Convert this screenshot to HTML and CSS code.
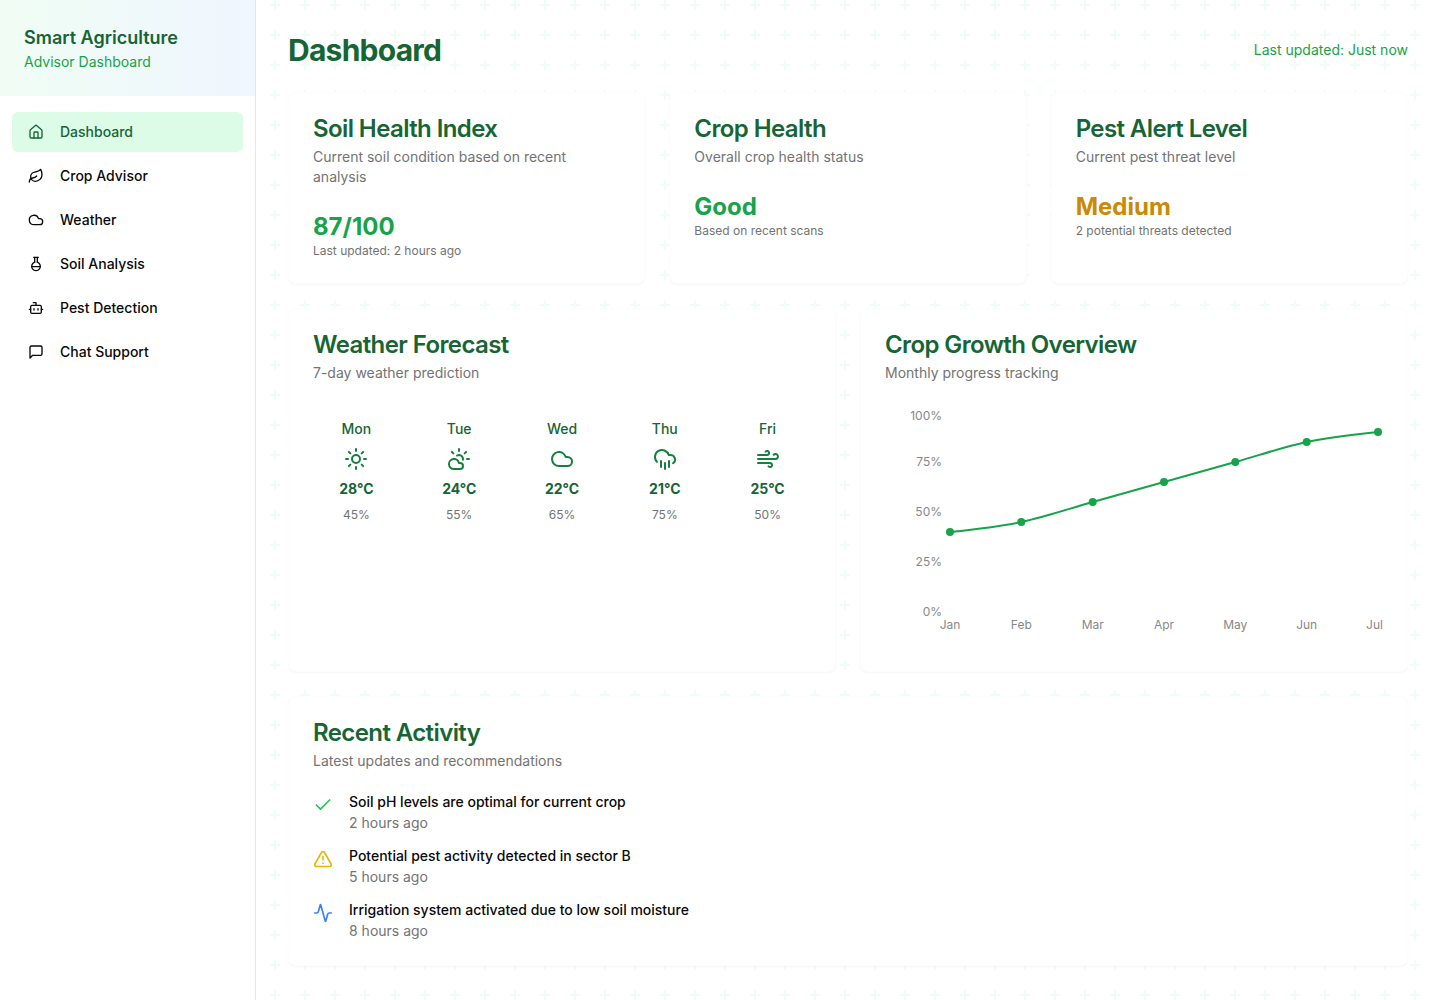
FILE: index.html
```html
<!DOCTYPE html>
<html lang="en">
<head>
    <meta charset="UTF-8">
    <meta name="viewport" content="width=device-width, initial-scale=1.0">
    <title>Smart Agriculture</title>
    <link rel="stylesheet" href="styles.css">
</head>
<body>
    <div class="layout">
        <aside class="sidebar">
            <div class="sidebar-header">
                <h2>Smart Agriculture</h2>
                <p>Advisor Dashboard</p>
            </div>
            <nav class="sidebar-nav">
                <a href="#" class="nav-link active">
                    <svg class="icon" viewBox="0 0 24 24"><path d="M15 21v-8a1 1 0 0 0-1-1h-4a1 1 0 0 0-1 1v8"/><path d="M3 10a2 2 0 0 1 .709-1.528l7-5.999a2 2 0 0 1 2.582 0l7 5.999A2 2 0 0 1 21 10v9a2 2 0 0 1-2 2H5a2 2 0 0 1-2-2z"/></svg>
                    Dashboard
                </a>
                <a href="#" class="nav-link">
                    <svg class="icon" viewBox="0 0 24 24"><path d="M11 20A7 7 0 0 1 9.8 6.1C15.5 5 17 4.48 19 2c1 2 2 4.18 2 8 0 5.5-4.78 10-10 10Z"/><path d="M2 21c0-3 1.85-5.36 5.08-6C9.5 14.52 12 13 13 12"/></svg>
                    Crop Advisor
                </a>
                <a href="#" class="nav-link">
                    <svg class="icon" viewBox="0 0 24 24"><path d="M17.5 19H9a7 7 0 1 1 6.71-9h1.79a4.5 4.5 0 1 1 0 9Z"/></svg>
                    Weather
                </a>
                <a href="#" class="nav-link">
                    <svg class="icon" viewBox="0 0 24 24"><path d="M10 2v7.31"/><path d="M14 9.3V1.99"/><path d="M8.5 2h7"/><path d="M14 9.3a6.5 6.5 0 1 1-4 0"/><path d="M5.52 16h12.96"/></svg>
                    Soil Analysis
                </a>
                <a href="#" class="nav-link">
                    <svg class="icon" viewBox="0 0 24 24"><path d="M12 8V4H8"/><rect width="16" height="12" x="4" y="8" rx="2"/><path d="M2 14h2"/><path d="M20 14h2"/><path d="M15 13v2"/><path d="M9 13v2"/></svg>
                    Pest Detection
                </a>
                <a href="#" class="nav-link">
                    <svg class="icon" viewBox="0 0 24 24"><path d="M21 15a2 2 0 0 1-2 2H7l-4 4V5a2 2 0 0 1 2-2h14a2 2 0 0 1 2 2z"/></svg>
                    Chat Support
                </a>
            </nav>
        </aside>

        <main class="content">
            <header class="page-header">
                <h1>Dashboard</h1>
                <span class="updated">Last updated: Just now</span>
            </header>

            <div class="stats">
                <section class="card">
                    <h3>Soil Health Index</h3>
                    <p class="description">Current soil condition based on recent analysis</p>
                    <div class="card-body">
                        <div class="stat-value">87/100</div>
                        <p class="stat-note">Last updated: 2 hours ago</p>
                    </div>
                </section>
                <section class="card">
                    <h3>Crop Health</h3>
                    <p class="description">Overall crop health status</p>
                    <div class="card-body">
                        <div class="stat-value">Good</div>
                        <p class="stat-note">Based on recent scans</p>
                    </div>
                </section>
                <section class="card">
                    <h3>Pest Alert Level</h3>
                    <p class="description">Current pest threat level</p>
                    <div class="card-body">
                        <div class="stat-value warning">Medium</div>
                        <p class="stat-note">2 potential threats detected</p>
                    </div>
                </section>
            </div>

            <div class="panels">
                <section class="card">
                    <h3>Weather Forecast</h3>
                    <p class="description">7-day weather prediction</p>
                    <div class="card-body forecast">
                        <div class="day">
                            <span class="day-name">Mon</span>
                            <svg class="icon" viewBox="0 0 24 24"><circle cx="12" cy="12" r="4"/><path d="M12 2v2"/><path d="M12 20v2"/><path d="m4.93 4.93 1.41 1.41"/><path d="m17.66 17.66 1.41 1.41"/><path d="M2 12h2"/><path d="M20 12h2"/><path d="m6.34 17.66-1.41 1.41"/><path d="m19.07 4.93-1.41 1.41"/></svg>
                            <span class="temp">28°C</span>
                            <span class="humidity">45%</span>
                        </div>
                        <div class="day">
                            <span class="day-name">Tue</span>
                            <svg class="icon" viewBox="0 0 24 24"><path d="M12 2v2"/><path d="m4.93 4.93 1.41 1.41"/><path d="M20 12h2"/><path d="m19.07 4.93-1.41 1.41"/><path d="M15.947 12.65a4 4 0 0 0-5.925-4.128"/><path d="M13 22H7a5 5 0 1 1 4.9-6H13a3 3 0 0 1 0 6Z"/></svg>
                            <span class="temp">24°C</span>
                            <span class="humidity">55%</span>
                        </div>
                        <div class="day">
                            <span class="day-name">Wed</span>
                            <svg class="icon" viewBox="0 0 24 24"><path d="M17.5 19H9a7 7 0 1 1 6.71-9h1.79a4.5 4.5 0 1 1 0 9Z"/></svg>
                            <span class="temp">22°C</span>
                            <span class="humidity">65%</span>
                        </div>
                        <div class="day">
                            <span class="day-name">Thu</span>
                            <svg class="icon" viewBox="0 0 24 24"><path d="M4 14.899A7 7 0 1 1 15.71 8h1.79a4.5 4.5 0 0 1 2.5 8.242"/><path d="M16 14v6"/><path d="M8 14v6"/><path d="M12 16v6"/></svg>
                            <span class="temp">21°C</span>
                            <span class="humidity">75%</span>
                        </div>
                        <div class="day">
                            <span class="day-name">Fri</span>
                            <svg class="icon" viewBox="0 0 24 24"><path d="M17.7 7.7a2.5 2.5 0 1 1 1.8 4.3H2"/><path d="M9.6 4.6A2 2 0 1 1 11 8H2"/><path d="M12.6 19.4A2 2 0 1 0 14 16H2"/></svg>
                            <span class="temp">25°C</span>
                            <span class="humidity">50%</span>
                        </div>
                    </div>
                </section>

                <section class="card">
                    <h3>Crop Growth Overview</h3>
                    <p class="description">Monthly progress tracking</p>
                    <div class="card-body">
                        <svg class="chart" viewBox="0 0 498 240" role="img" aria-label="Crop growth by month">
                            <g class="y-axis">
                                <text x="57" y="13">100%</text>
                                <text x="57" y="59">75%</text>
                                <text x="57" y="109">50%</text>
                                <text x="57" y="159">25%</text>
                                <text x="57" y="209">0%</text>
                            </g>
                            <g class="x-axis">
                                <text x="65" y="222">Jan</text>
                                <text x="136.3" y="222">Feb</text>
                                <text x="207.7" y="222">Mar</text>
                                <text x="279" y="222">Apr</text>
                                <text x="350.3" y="222">May</text>
                                <text x="421.7" y="222">Jun</text>
                                <text x="489.5" y="222">Jul</text>
                            </g>
                            <path class="line" d="M65 125C88.8 122.5 112.6 120 136.3 115C160.1 110 183.9 101.7 207.7 95L279 75L350.3 55C374.1 48.3 397.9 40 421.7 35C445.4 30 469.2 27.5 493 25"/>
                            <g class="dots">
                                <circle cx="65" cy="125" r="4"/>
                                <circle cx="136.3" cy="115" r="4"/>
                                <circle cx="207.7" cy="95" r="4"/>
                                <circle cx="279" cy="75" r="4"/>
                                <circle cx="350.3" cy="55" r="4"/>
                                <circle cx="421.7" cy="35" r="4"/>
                                <circle cx="493" cy="25" r="4"/>
                            </g>
                        </svg>
                    </div>
                </section>
            </div>

            <section class="card">
                <h3>Recent Activity</h3>
                <p class="description">Latest updates and recommendations</p>
                <ul class="card-body activity">
                    <li>
                        <svg class="icon success" viewBox="0 0 24 24"><path d="M20 6 9 17l-5-5"/></svg>
                        <div>
                            <p class="activity-title">Soil pH levels are optimal for current crop</p>
                            <p class="activity-time">2 hours ago</p>
                        </div>
                    </li>
                    <li>
                        <svg class="icon alert" viewBox="0 0 24 24"><path d="m21.73 18-8-14a2 2 0 0 0-3.48 0l-8 14A2 2 0 0 0 4 21h16a2 2 0 0 0 1.73-3"/><path d="M12 9v4"/><path d="M12 17h.01"/></svg>
                        <div>
                            <p class="activity-title">Potential pest activity detected in sector B</p>
                            <p class="activity-time">5 hours ago</p>
                        </div>
                    </li>
                    <li>
                        <svg class="icon info" viewBox="0 0 24 24"><path d="M22 12h-2.48a2 2 0 0 0-1.93 1.46l-2.35 8.36a.25.25 0 0 1-.48 0L9.24 2.18a.25.25 0 0 0-.48 0l-2.35 8.36A2 2 0 0 1 4.49 12H2"/></svg>
                        <div>
                            <p class="activity-title">Irrigation system activated due to low soil moisture</p>
                            <p class="activity-time">8 hours ago</p>
                        </div>
                    </li>
                </ul>
            </section>
        </main>
    </div>
</body>
</html>
```
FILE: styles.css
```css
* {
    box-sizing: border-box;
    margin: 0;
    padding: 0;
}

body {
    font-family: Inter, "Liberation Sans", sans-serif;
    font-size: 14px;
    line-height: 20px;
    color: #0a0a0a;
    background-color: #fff;
    /* faint plus signs */
    background-image: url("data:image/svg+xml,%3Csvg xmlns='http://www.w3.org/2000/svg' width='30' height='30'%3E%3Cpath d='M4 0h2v4h4v2H6v4H4V6H0V4h4z' fill='%23f1fcf7'/%3E%3C/svg%3E");
}

.layout {
    display: flex;
    min-height: 100vh;
}

.icon {
    flex-shrink: 0;
    fill: none;
    stroke: currentColor;
    stroke-width: 2;
    stroke-linecap: round;
    stroke-linejoin: round;
}

/* Sidebar */
.sidebar {
    width: 256px;
    flex-shrink: 0;
    background-color: #fff;
    border-right: 1px solid #e5e5e5;
}

.sidebar-header {
    padding: 24px;
    background: linear-gradient(to right, #f0fdf4, #eff6ff);
}

.sidebar-header h2 {
    font-size: 18px;
    line-height: 28px;
    font-weight: 600;
    color: #166534;
}

.sidebar-header p {
    color: #16a34a;
}

.sidebar-nav {
    display: flex;
    flex-direction: column;
    gap: 4px;
    padding: 16px 12px;
}

.nav-link {
    display: flex;
    align-items: center;
    gap: 16px;
    height: 40px;
    padding: 0 16px;
    border-radius: 6px;
    font-weight: 500;
    color: #0a0a0a;
    text-decoration: none;
}

.nav-link .icon {
    width: 16px;
    height: 16px;
}

.nav-link:hover {
    background-color: #f0fdf4;
}

.nav-link.active {
    background-color: #dcfce7;
    color: #166534;
}

/* Main content */
.content {
    flex: 1;
    min-width: 0;
    display: flex;
    flex-direction: column;
    gap: 24px;
    padding: 32px;
}

.page-header {
    display: flex;
    justify-content: space-between;
    align-items: center;
}

.page-header h1 {
    font-size: 30px;
    line-height: 36px;
    font-weight: 700;
    letter-spacing: -0.025em;
    color: #166534;
}

.updated {
    color: #16a34a;
}

.stats {
    display: grid;
    grid-template-columns: repeat(3, 1fr);
    gap: 24px;
}

.panels {
    display: grid;
    grid-template-columns: repeat(2, 1fr);
    gap: 24px;
}

.card {
    padding: 24px;
    background-color: #fff;
    border: 1px solid #fcfefd;
    border-radius: 8px;
    box-shadow: 0 1px 2px rgba(0,0,0,0.04);
}

.card h3 {
    font-size: 24px;
    line-height: 24px;
    font-weight: 600;
    letter-spacing: -0.025em;
    color: #166534;
}

.description {
    margin-top: 6px;
    color: #737373;
}

.card-body {
    margin-top: 24px;
}

.stat-value {
    font-size: 24px;
    line-height: 32px;
    font-weight: 700;
    color: #16a34a;
}

.stat-value.warning {
    color: #ca8a04;
}

.stat-note {
    font-size: 12px;
    line-height: 16px;
    color: #737373;
}

/* Weather */
.forecast {
    display: grid;
    grid-template-columns: repeat(5, 1fr);
    gap: 16px;
}

.day {
    display: flex;
    flex-direction: column;
    align-items: center;
    gap: 8px;
    padding: 12px;
}

.day .icon {
    width: 24px;
    height: 24px;
    color: #15803d;
}

.day-name {
    font-weight: 500;
    color: #166534;
}

.temp {
    font-weight: 700;
    color: #166534;
}

.humidity {
    font-size: 12px;
    line-height: 16px;
    color: #737373;
}

/* Chart */
.chart {
    display: block;
    width: 100%;
}

.chart text {
    font-size: 12px;
    fill: #888;
}

.y-axis {
    text-anchor: end;
}

.x-axis {
    text-anchor: middle;
}

.line {
    fill: none;
    stroke: #16a34a;
    stroke-width: 2;
}

.dots {
    fill: #16a34a;
}

/* Activity */
.activity {
    display: flex;
    flex-direction: column;
    gap: 16px;
    list-style: none;
}

.activity li {
    display: flex;
    gap: 16px;
}

.activity .icon {
    width: 20px;
    height: 20px;
}

.activity-title {
    line-height: 14px;
    font-weight: 500;
}

.activity-time {
    margin-top: 4px;
    color: #737373;
}

.success {
    color: #22c55e;
}

.alert {
    color: #eab308;
}

.info {
    color: #3b82f6;
}

@media (max-width: 900px) {
    .stats,
    .panels {
        grid-template-columns: 1fr;
    }
}
```
